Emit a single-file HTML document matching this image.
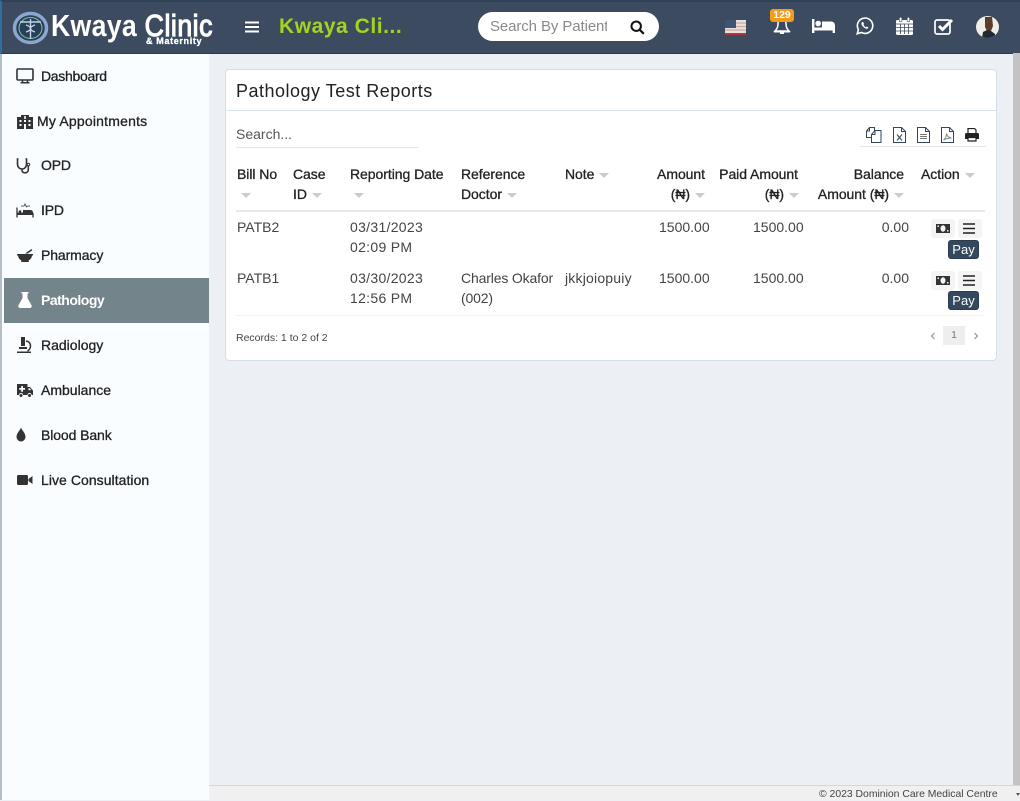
<!DOCTYPE html>
<html><head><meta charset="utf-8"><title>Pathology Test Reports</title>
<style>
*{box-sizing:border-box}
html,body{margin:0;padding:0}
body{width:1020px;height:800px;overflow:hidden;position:relative;background:#ecf0f5;font-family:"Liberation Sans",sans-serif;color:#222}
.a{position:absolute;white-space:nowrap}
.hd{position:absolute;left:0;top:0;width:1020px;height:54px;background:#3c4b60;border-top:2px solid #2e4258;border-bottom:1px solid #2c3a4c;border-left:2px solid #2f6f9f}
.side{position:absolute;left:0;top:54px;width:209px;height:746px;background:#f9fdff;border-left:2px solid #b4bec6}
.m{position:absolute;left:41px;font-size:14px;line-height:16px;color:#222;font-weight:400;-webkit-text-stroke:.3px #222;white-space:nowrap}
.act{position:absolute;left:4px;top:278px;width:205px;height:45px;background:#74848b}
.ic{position:absolute;left:16px;width:18px;height:18px}
.card{position:absolute;left:225px;top:69px;width:772px;height:292px;background:#fff;border:1px solid #d2dfe8;border-radius:4px}
.th{position:absolute;font-size:14px;line-height:20px;color:#222;-webkit-text-stroke:.3px #222;white-space:nowrap;letter-spacing:-.05px}
.td{position:absolute;font-size:14px;line-height:20px;color:#444;white-space:nowrap}
.c{display:inline-block;width:0;height:0;border-left:5px solid transparent;border-right:5px solid transparent;border-top:5px solid #ccc;margin-left:5px;vertical-align:1px}
.b{position:absolute;width:24px;height:19px;background:#f4f4f4;border-radius:3px}
.pay{position:absolute;left:948px;width:31px;height:19px;background:#34495e;border:1px solid #2b3d50;border-radius:3px;color:#fff;font-size:13px;line-height:18px;text-align:center}
</style></head><body>

<div class="hd"></div>
<svg class="a" style="left:12px;top:11px" width="37" height="34" viewBox="0 0 37 34"><ellipse cx="18.500" cy="17" rx="16" ry="14.500" fill="#27405a" stroke="#8ba6cf" stroke-width="3.500"/><ellipse cx="18.500" cy="17" rx="11.500" ry="10.500" fill="none" stroke="#8dc49a" stroke-width="1"/><path d="M8 11h21M18.500 8v20M14 14c6 2 6 5 0 7M23 14c-6 2-6 5 0 7" stroke="#c3d3e4" stroke-width="1.400" fill="none"/></svg>
<div class="a" style="left:51px;top:8px;font-size:31px;line-height:36px;font-weight:700;color:#fff;transform:scaleX(.86);transform-origin:0 0;letter-spacing:.35px">Kwaya <span style="font-weight:400;-webkit-text-stroke:1.200px #fff;letter-spacing:.6px">Clinic</span></div>
<div class="a" style="left:146px;top:36px;font-size:9px;line-height:10px;font-weight:700;color:#fff;letter-spacing:.65px;-webkit-text-stroke:.3px #fff">&amp; Maternity</div>
<svg class="a" style="left:245px;top:21px" width="14" height="12"><path d="M0 1.500h14M0 6h14M0 10.500h14" stroke="#fff" stroke-width="2"/></svg>
<div class="a" style="left:279px;top:14px;font-size:21px;line-height:26px;font-weight:700;color:#a4d41f;letter-spacing:.55px">Kwaya Cli...</div>
<div class="a" style="left:478px;top:12px;width:181px;height:29px;background:#fff;border-radius:15px"></div>
<div class="a" style="left:490px;top:18px;width:117px;overflow:hidden;font-size:15px;line-height:18px;color:#8a8a8a;letter-spacing:-.1px">Search By Patient Name</div>
<svg class="a" style="left:630px;top:20px" width="15" height="15" viewBox="0 0 15 15"><circle cx="6.200" cy="6.200" r="4.700" fill="none" stroke="#111" stroke-width="2"/><path d="M9.800 9.800l4 4" stroke="#111" stroke-width="2.200"/></svg>

<svg class="a" style="left:725px;top:20px" width="21" height="15"><rect width="21" height="15" fill="#e8e2dc"/><path d="M0 3h21M0 6.500h21M0 10h21" stroke="#c9a9a0" stroke-width="1.200"/><rect y="13" width="21" height="2" fill="#b5343c"/><rect width="11" height="8" fill="#3f5373"/></svg>
<svg class="a" style="left:773px;top:16px" width="18" height="19" viewBox="0 0 18 19"><path d="M9 2.500C6 2.500 5 5 5 8c0 3.500-1.500 5.500-3 7h14c-1.500-1.500-3-3.500-3-7 0-3-1-5.500-4-5.500z" fill="none" stroke="#fff" stroke-width="1.500"/><path d="M1 14.800h16v1.700H1zM7 16.500h4V18H7z" fill="#fff"/></svg>
<div class="a" style="left:770px;top:9px;width:24px;height:13px;background:#f49b17;border-radius:3px;color:#fff;font-size:10.500px;line-height:13px;font-weight:700;text-align:center">129</div>
<svg class="a" style="left:812px;top:18px" width="23" height="15" viewBox="0 0 23 15"><rect x="0" y="1" width="2.400" height="14" fill="#fff"/><rect x="20.600" y="8" width="2.400" height="7" fill="#fff"/><rect x="0" y="9.500" width="23" height="3" fill="#fff"/><circle cx="6.200" cy="5.500" r="2.800" fill="#fff"/><path d="M10 3.500h9a4 4 0 0 1 4 4V10H10z" fill="#fff"/></svg>
<svg class="a" style="left:856px;top:17px" width="18" height="18" viewBox="0 0 18 18"><path d="M1.200 16.800l1.200-4.200A7.700 7.700 0 1 1 5.400 15.500z" fill="none" stroke="#fff" stroke-width="1.600"/><path d="M6 5.200c-1 1 -.6 2.700 1.200 4.600s3.600 2.500 4.700 1.600c.6-.6.500-1-.1-1.300l-1.200-.6-.8.700c-1-.5-2-1.500-2.400-2.400l.7-.8-.6-1.300c-.3-.6-.9-.8-1.500-.5z" fill="#fff"/></svg>
<svg class="a" style="left:896px;top:17px" width="17" height="18" viewBox="0 0 17 18"><path d="M1.500 3h14A1.500 1.500 0 0 1 17 4.500V16.500A1.500 1.500 0 0 1 15.500 18H1.500A1.500 1.500 0 0 1 0 16.500V4.500A1.500 1.500 0 0 1 1.500 3z" fill="#fff"/><rect x="3.300" y="0.300" width="2.600" height="4.500" rx="1" fill="#fff" stroke="#3c4b60" stroke-width=".6"/><rect x="11.100" y="0.300" width="2.600" height="4.500" rx="1" fill="#fff" stroke="#3c4b60" stroke-width=".6"/><path d="M0 7h17M0 10.500h17M0 14h17M4.500 7v10M8.500 7v10M12.500 7v10" stroke="#3c4b60" stroke-width=".8"/></svg>
<svg class="a" style="left:934px;top:18px" width="20" height="17" viewBox="0 0 20 17"><rect x="1" y="2" width="15" height="14" rx="2" fill="none" stroke="#fff" stroke-width="1.700"/><path d="M5 8l3.500 3.500L18 2" fill="none" stroke="#fff" stroke-width="3"/></svg>
<svg class="a" style="left:976px;top:16px" width="23" height="22" viewBox="0 0 23 22"><defs><clipPath id="av"><ellipse cx="11.500" cy="11" rx="11.500" ry="11"/></clipPath></defs><g clip-path="url(#av)"><rect width="23" height="22" fill="#f1eeea"/><path d="M9 1h7l1 9-2 5H11L9 11z" fill="#5b3d2c"/><path d="M6 22l1-6 4-2 4 1 4 3v4z" fill="#1f2a35"/></g></svg>

<div class="side"></div>
<div class="act"></div>

<svg class="ic" style="top:67px" viewBox="0 0 18 18"><rect x="1" y="2" width="16" height="11" rx="1" fill="none" stroke="#333" stroke-width="1.600"/><path d="M6.500 13.500v1.800M11.500 13.500v1.800M4.500 15.800h9" stroke="#333" stroke-width="1.500"/></svg>
<div class="m" style="top:68px;letter-spacing:-.3px">Dashboard</div>
<svg class="ic" style="top:112px" viewBox="0 0 18 18"><path d="M5 3h8v2h4v12H1V5h4z" fill="#333"/><path d="M8.200 4h1.600v3H8.200zM3.500 8h2v2h-2zM8 8h2v2H8zM12.500 8h2v2h-2zM3.500 12h2v2h-2zM8 12h2v5H8zM12.500 12h2v2h-2z" fill="#f9fdff"/></svg>
<div class="m" style="left:37px;top:113px;letter-spacing:.2px">My Appointments</div>
<svg class="ic" style="top:157px" viewBox="0 0 18 18"><path d="M2.500 2H1.500v5c0 3 2 5 4.500 5s4.500-2 4.500-5V2H9.500M6 12v1c0 1.800 1.200 2.800 3 2.800s3.300-1 3.300-3V9" fill="none" stroke="#333" stroke-width="1.600"/><circle cx="12.400" cy="7.500" r="1.300" fill="none" stroke="#333"/></svg>
<div class="m" style="top:157px;letter-spacing:-.2px">OPD</div>
<svg class="ic" style="top:201px" viewBox="0 0 18 18"><path d="M1 6.500v10M17 12v4.500" stroke="#333" stroke-width="1.300"/><path d="M1 14h16v-2.500a2.500 2.500 0 0 0-2.500-2.500H7v2.500H1z" fill="#333"/><circle cx="4" cy="10.500" r="1.300" fill="#333"/><path d="M5 5h3l1-2 1.500 3 1-1h2.500" fill="none" stroke="#333" stroke-width=".8"/></svg>
<div class="m" style="top:202px;letter-spacing:-.2px">IPD</div>
<svg class="ic" style="top:246px" viewBox="0 0 18 18"><path d="M1 8h16v1.500h-1c-.3 2.500-1.700 4.300-3.500 5l.5 1.500H5l.5-1.500C3.700 13.800 2.300 12 2 9.500H1z" fill="#333"/><path d="M9 7.500l6.500-4.500.8 1.200-4.500 3.300z" fill="#333"/></svg>
<div class="m" style="top:247px;letter-spacing:-.1px">Pharmacy</div>
<svg class="ic" style="top:291px" viewBox="0 0 18 18"><path d="M5.500 1h7v1.500h-1V7l4 7.200c.7 1.300-.2 2.800-1.600 2.800H4.100c-1.400 0-2.300-1.500-1.600-2.800l4-7.200V2.500h-1z" fill="#fff"/></svg>
<div class="m" style="top:292px;color:#fff;font-weight:700;-webkit-text-stroke:0;letter-spacing:-.5px">Pathology</div>
<svg class="ic" style="top:336px" viewBox="0 0 18 18"><path d="M5 1h4v9H5z" fill="#333"/><path d="M3 11h8v2H3zM1 15.500h14v1.500H1z" fill="#333"/><path d="M10 5c3 .5 4.500 2.500 4.500 5 0 2-1 3.800-3 5" fill="none" stroke="#333" stroke-width="1.500"/></svg>
<div class="m" style="top:337px">Radiology</div>
<svg class="ic" style="top:381px" viewBox="0 0 18 18"><path d="M1 3h10.500v3H14l3 3.500V14h-1.500a2 2 0 0 0-4 0H7a2 2 0 0 0-4 0H1z" fill="#333"/><circle cx="5" cy="14.500" r="1.500" fill="#333"/><circle cx="13.500" cy="14.500" r="1.500" fill="#333"/><path d="M5.200 5h1.800v2h2v1.800H7v2H5.200v-2h-2V7h2z" fill="#f9fdff"/><path d="M12.500 7.200h1.200l1.500 1.900h-2.700z" fill="#f9fdff"/></svg>
<div class="m" style="top:382px">Ambulance</div>
<svg class="ic" style="top:426px;left:12px" viewBox="0 0 18 18"><path d="M9 1.500c1 3 4.500 5.500 4.500 9.500a4.500 4.500 0 0 1-9 0c0-4 3.500-6.500 4.500-9.500z" fill="#333"/></svg>
<div class="m" style="top:427px;letter-spacing:-.1px">Blood Bank</div>
<svg class="ic" style="top:471px" viewBox="0 0 18 18"><rect x="1" y="4" width="11" height="10" rx="1.500" fill="#333"/><path d="M12.500 8l4-3v8l-4-3z" fill="#333"/></svg>
<div class="m" style="top:472px;letter-spacing:.05px">Live Consultation</div>

<div class="card"></div>
<div class="a" style="left:236px;top:80px;font-size:18px;line-height:22px;color:#222;letter-spacing:.5px">Pathology Test Reports</div>
<div class="a" style="left:226px;top:110px;width:770px;height:1px;background:#d9e3ea"></div>

<div class="a" style="left:236px;top:126px;font-size:14px;line-height:16px;color:#555">Search...</div>
<div class="a" style="left:236px;top:147px;width:182px;height:1px;background:#e6e6e6"></div>
<div class="a" style="left:860px;top:146px;width:126px;height:1px;background:#e6e6e6"></div>

<svg class="a" style="left:866px;top:127px" width="16" height="16" viewBox="0 0 16 16" fill="none" stroke="#33475a" stroke-width="1"><path d="M.5 4L3.500.5h5v3M.5 4v6.500h4.500M.5 4h3V.5"/><path d="M5.500 7.500L9 3.500h6v12H5.500zM5.500 7.500H9v-4" fill="#fff"/></svg>
<svg class="a" style="left:893px;top:127px" width="13" height="16" viewBox="0 0 13 16" fill="none" stroke="#33475a" stroke-width="1"><path d="M.5.500h8l4 4v11H.5zM8.500.5v4h4"/><path d="M4 7.500l5 6M9 7.500l-5 6" stroke-width="1"/></svg>
<svg class="a" style="left:917px;top:127px" width="13" height="16" viewBox="0 0 13 16" fill="none" stroke="#33475a" stroke-width="1"><path d="M.5.500h8l4 4v11H.5zM8.500.5v4h4"/><path d="M3 7.500h7M3 9.500h7M3 11.500h7" stroke="#777"/></svg>
<svg class="a" style="left:941px;top:127px" width="13" height="16" viewBox="0 0 13 16" fill="none" stroke="#33475a" stroke-width="1"><path d="M.5.500h8l4 4v11H.5zM8.500.5v4h4"/><path d="M2.500 13c2-1.500 3-4 3-6.500.5 2.500 2 4 5 4.500-2.500 0-5 .5-8 2z" stroke="#8a8a8a"/></svg>
<svg class="a" style="left:965px;top:128px" width="14" height="14" viewBox="0 0 14 14"><path d="M3 .5h6.500L11 2v4H3z" fill="none" stroke="#222" stroke-width="1.200"/><path d="M1.500 5h11A1.500 1.500 0 0 1 14 6.500V11h-2.500V9h-9v2H0V6.500A1.500 1.500 0 0 1 1.500 5z" fill="#222"/><path d="M3 9.500h8V13H3z" fill="none" stroke="#222" stroke-width="1.200"/></svg>

<div class="th" style="left:237px;top:164px">Bill No<br><i class="c" style="margin-left:4px"></i></div>
<div class="th" style="left:293px;top:164px">Case<br>ID<i class="c"></i></div>
<div class="th" style="left:350px;top:164px">Reporting Date<br><i class="c" style="margin-left:4px"></i></div>
<div class="th" style="left:461px;top:164px">Reference<br>Doctor<i class="c"></i></div>
<div class="th" style="left:565px;top:164px">Note<i class="c"></i></div>
<div class="th" style="right:315px;top:164px;text-align:right">Amount<br>(₦)<i class="c"></i></div>
<div class="th" style="right:221px;top:164px;text-align:right;width:90px"><span style="margin-right:1px">Paid Amount</span><br>(₦)<i class="c"></i></div>
<div class="th" style="right:116px;top:164px;text-align:right;width:100px">Balance<br>Amount (₦)<i class="c"></i></div>
<div class="th" style="left:921px;top:164px">Action<i class="c"></i></div>
<div class="a" style="left:236px;top:210px;width:749px;height:2px;background:#e9e9e9"></div>

<div class="td" style="left:237px;top:217px">PATB2</div>
<div class="td" style="left:350px;top:217px;letter-spacing:.3px">03/31/2023<br>02:09 PM</div>
<div class="td" style="left:659px;top:217px">1500.00</div>
<div class="td" style="left:753px;top:217px">1500.00</div>
<div class="td" style="right:111px;top:217px">0.00</div>

<div class="td" style="left:237px;top:268px">PATB1</div>
<div class="td" style="left:350px;top:268px;letter-spacing:.3px">03/30/2023<br>12:56 PM</div>
<div class="td" style="left:461px;top:268px;letter-spacing:-.15px">Charles Okafor<br>(002)</div>
<div class="td" style="left:565px;top:268px;letter-spacing:.2px">jkkjoiopuiy</div>
<div class="td" style="left:659px;top:268px">1500.00</div>
<div class="td" style="left:753px;top:268px">1500.00</div>
<div class="td" style="right:111px;top:268px">0.00</div>

<div class="b" style="left:931px;top:219px"></div>
<div class="b" style="left:958px;top:219px"></div>
<svg class="a" style="left:936px;top:224px" width="14" height="9" viewBox="0 0 14 9"><path d="M0 0h14v9H0z" fill="#333"/><ellipse cx="7" cy="4.500" rx="2.500" ry="3.200" fill="#f4f4f4"/><path d="M1.500 1.500h1.500v1.500H1.500zM11 6h1.500v1.500H11z" fill="#f4f4f4"/></svg>
<svg class="a" style="left:963px;top:223px" width="12" height="11"><path d="M0 1h12M0 5.500h12M0 10h12" stroke="#222" stroke-width="1.600"/></svg>
<div class="pay" style="top:240px">Pay</div>

<div class="b" style="left:931px;top:271px"></div>
<div class="b" style="left:958px;top:271px"></div>
<svg class="a" style="left:936px;top:276px" width="14" height="9" viewBox="0 0 14 9"><path d="M0 0h14v9H0z" fill="#333"/><ellipse cx="7" cy="4.500" rx="2.500" ry="3.200" fill="#f4f4f4"/><path d="M1.500 1.500h1.500v1.500H1.500zM11 6h1.500v1.500H11z" fill="#f4f4f4"/></svg>
<svg class="a" style="left:963px;top:275px" width="12" height="11"><path d="M0 1h12M0 5.500h12M0 10h12" stroke="#222" stroke-width="1.600"/></svg>
<div class="pay" style="top:291px">Pay</div>

<div class="a" style="left:236px;top:315px;width:749px;height:1px;background:#f2f2f2"></div>
<div class="a" style="left:236px;top:332px;font-size:10.500px;line-height:13px;color:#444">Records: 1 to 2 of 2</div>
<svg class="a" style="left:930px;top:332px" width="6" height="8"><path d="M4.500 1L1.500 4l3 3" fill="none" stroke="#888"/></svg>
<div class="a" style="left:943px;top:326px;width:22px;height:19px;background:#eee;color:#777;font-size:10.500px;line-height:19px;text-align:center">1</div>
<svg class="a" style="left:973px;top:332px" width="6" height="8"><path d="M1.500 1l3 3-3 3" fill="none" stroke="#888"/></svg>

<div class="a" style="left:209px;top:785px;width:811px;height:15px;background:#f0f0f0;border-top:1px solid #d2d6de"></div>
<div class="a" style="left:819px;top:788px;font-size:10.400px;line-height:13px;color:#444">© 2023 Dominion Care Medical Centre</div>
<div class="a" style="left:1013px;top:53px;width:7px;height:732px;background:#c4c2c2"></div>
<svg class="a" style="left:1016px;top:793px" width="4" height="4"><path d="M0 0h4L2 3z" fill="#555"/></svg>
</body></html>
